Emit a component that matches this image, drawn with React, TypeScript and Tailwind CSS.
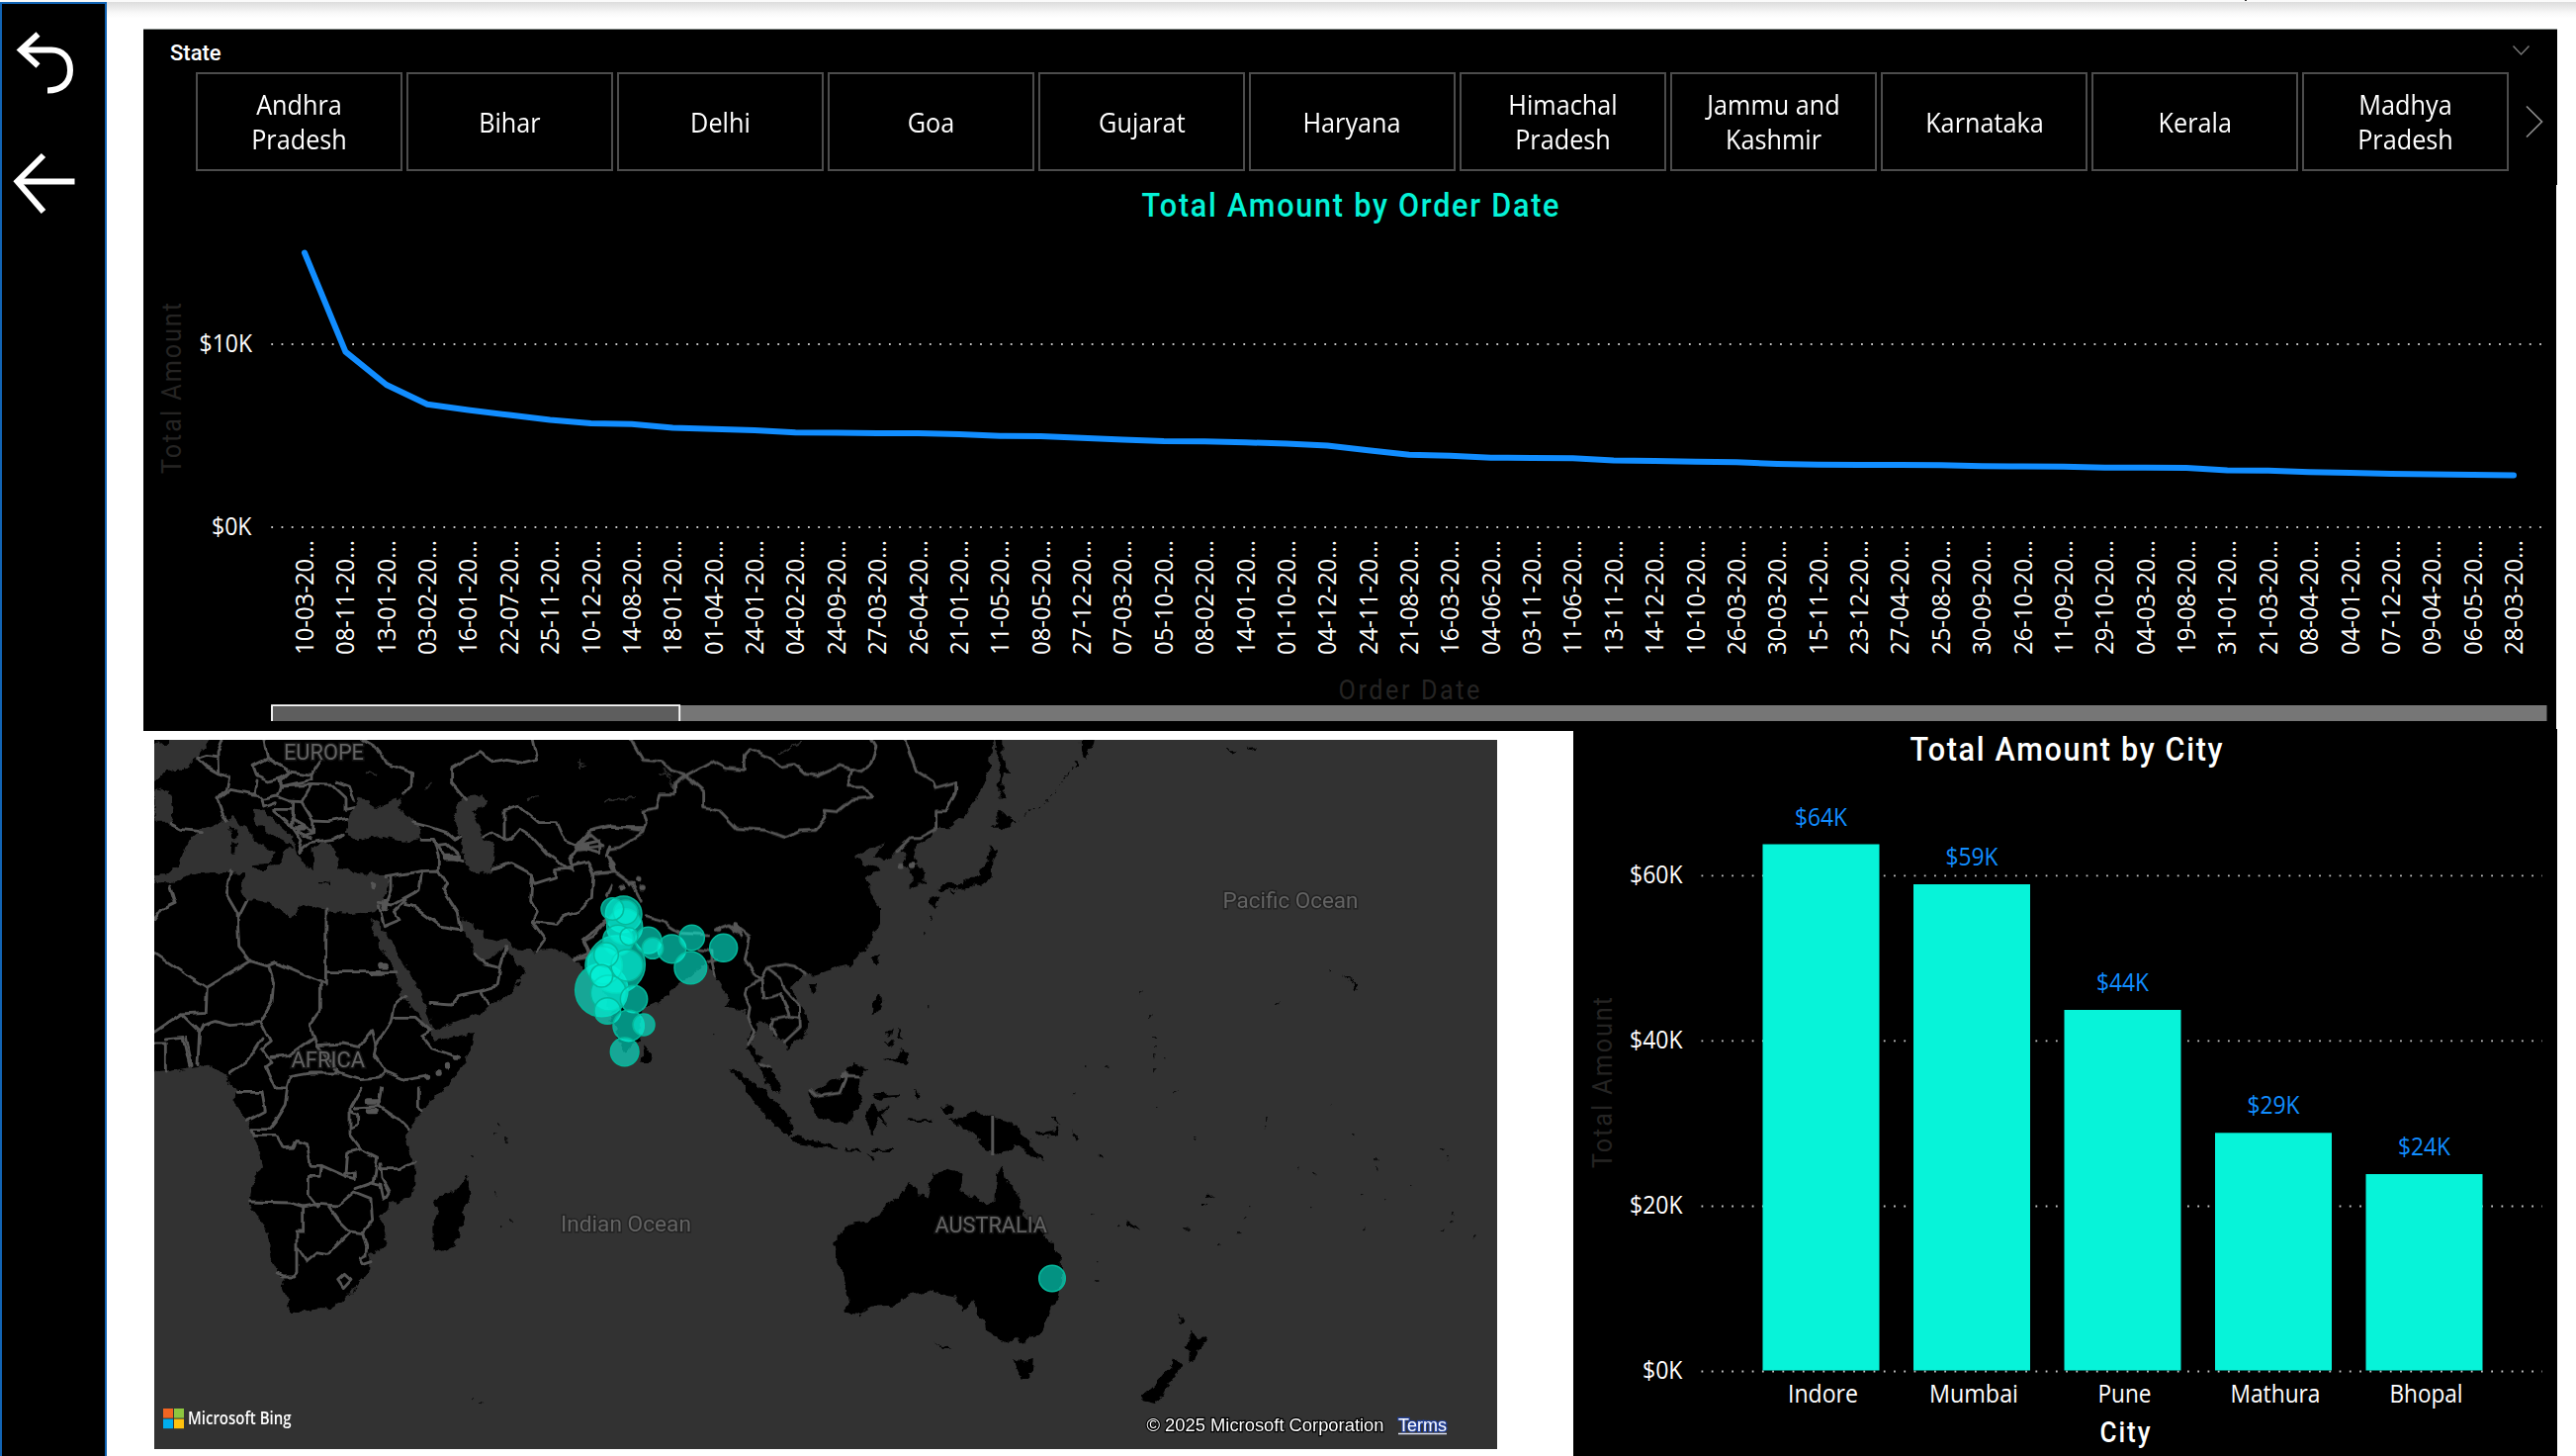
import React from "react";

const STATES = [
  "Andhra Pradesh", "Bihar", "Delhi", "Goa", "Gujarat", "Haryana",
  "Himachal Pradesh", "Jammu and Kashmir", "Karnataka", "Kerala", "Madhya Pradesh",
];

const DATES = (
  "10-03 08-11 13-01 03-02 16-01 22-07 25-11 10-12 14-08 18-01 01-04 24-01 04-02 24-09 27-03 26-04 21-01 11-05 " +
  "08-05 27-12 07-03 05-10 08-02 14-01 01-10 04-12 24-11 21-08 16-03 04-06 03-11 11-06 13-11 14-12 10-10 26-03 " +
  "30-03 15-11 23-12 27-04 25-08 30-09 26-10 11-09 29-10 04-03 19-08 31-01 21-03 08-04 04-01 07-12 09-04 06-05 28-03"
).split(" ");

const LINE_Y = [
  255.5, 355.7, 389, 408.7, 414.5, 419.5, 424.6, 428, 428.7, 432.5, 433.7, 435, 437.3, 437.5, 438, 438, 439, 440.7,
  441, 442.7, 444.5, 446, 446.3, 447.3, 448.5, 450.5, 455.3, 459.8, 460.8, 462.7, 463, 463.3, 465.4, 466, 466.8,
  467.3, 469, 469.8, 470, 470.1, 470.3, 471.3, 471.5, 471.7, 472.7, 472.8, 473, 475.5, 475.8, 477.3, 478, 479, 479.5,
  480, 480.5,
];

const X0 = 308;
const STEP = 41.37;

const CITIES = [
  { name: "Indore", w: 70, value: "$64K", top: 853.5, base: 835 },
  { name: "Mumbai", w: 89, value: "$59K", top: 894, base: 875 },
  { name: "Pune", w: 53, value: "$44K", top: 1021, base: 1002 },
  { name: "Mathura", w: 90, value: "$29K", top: 1145.3, base: 1126 },
  { name: "Bhopal", w: 73, value: "$24K", top: 1187, base: 1168 },
];

const SEGOE = "'Open Sans', 'Noto Sans', sans-serif";
const DIN = "Roboto, 'Open Sans', sans-serif";

type LabelProps = {
  x: number;
  y: number;
  w: number;
  size: number;
  fill?: string;
  anchor?: "start" | "middle" | "end";
  weight?: number;
  rotate?: boolean;
  children: string;
};

function Label({ x, y, w, size, fill = "#fff", anchor = "start", weight = 400, rotate, children }: LabelProps) {
  return (
    <text
      x={x}
      y={y}
      fontSize={size}
      fill={fill}
      textAnchor={anchor}
      fontFamily={SEGOE}
      fontWeight={weight}
      textLength={w}
      lengthAdjust="spacingAndGlyphs"
      transform={rotate ? `rotate(-90 ${x} ${y})` : undefined}
    >
      {children}
    </text>
  );
}

// Narrow, widely tracked heading text.
const NARROW = 0.9;

function Heading({ x, y, w, size, fill = "#fff", weight = 500, rotate, children }: LabelProps) {
  return (
    <text
      fontSize={size}
      fill={fill}
      fontFamily={DIN}
      fontWeight={weight}
      textLength={w / NARROW}
      lengthAdjust="spacing"
      transform={`translate(${x} ${y}) ${rotate ? "rotate(-90)" : ""} scale(${NARROW} 1)`}
    >
      {children}
    </text>
  );
}

function Grid({ x1, x2, y }: { x1: number; x2: number; y: number }) {
  return <line x1={x1} x2={x2} y1={y} y2={y} stroke="#c4c4c4" strokeWidth={1.8} strokeDasharray="1.8 8.44" />;
}

function Sidebar() {
  return (
    <nav className="h-[1470px] w-[108px] shrink-0 border-x-2 border-t-2 border-[#1264b4] bg-black">
      <svg width="104" height="230" viewBox="2 4 104 230" fill="none" stroke="#fff" strokeWidth="6">
        <path d="M38.5 34.5 L21 50.5 L38.5 66.5" />
        <path d="M21 50.5 H52 C64 50.5 71 59 71 71 C71 84 62 91.5 48 91.5" />
        <path d="M44 157 L17.5 183.5 L44 214" />
        <path d="M18 183.5 H75.5" />
      </svg>
    </nav>
  );
}

function Slicer() {
  return (
    <section className="flex h-[158px] w-[2441px] flex-col border-t border-[#8a8f8c] bg-black">
      <header className="flex h-[43px] items-start justify-between pl-[27px] pr-[27px]">
        <span className="mt-[9px] font-[Roboto] text-[22px] leading-[30px] font-medium text-white">State</span>
        <svg className="mt-[15px]" width="19" height="12" fill="none" stroke="#767676" strokeWidth="1.5">
          <path d="M1.5 1.5 L9.5 10 L17.5 1.5" />
        </svg>
      </header>
      <div className="flex items-center pl-[53px]">
        <div className="flex gap-[4px]">
          {STATES.map((s) => (
            <button
              key={s}
              className="flex h-[100px] w-[209px] items-center justify-center border-2 border-[#4c4c4c] px-[22px] text-center font-['Open_Sans'] text-[27px] leading-[35px] text-white"
            >
              <span className="max-w-[165px] scale-x-[0.935]">{s}</span>
            </button>
          ))}
        </div>
        <svg className="ml-[16px]" width="20" height="34" fill="none" stroke="#8c8c8c" strokeWidth="1.7">
          <path d="M2 1.5 L17.5 17 L2 32.5" />
        </svg>
      </div>
    </section>
  );
}

function LineChart() {
  const points = LINE_Y.map((y, i) => `${(X0 + i * STEP).toFixed(1)},${y}`).join(" ");
  return (
    <svg className="block bg-black" width="2440" height="550" viewBox="145 187 2440 550">
      <Heading x={1154.5} y={219} w={422} size={34} fill="#05f2d7">Total Amount by Order Date</Heading>
      <Heading x={182.5} y={479} w={173} size={28} fill="#252423" weight={400} rotate>Total Amount</Heading>
      <Heading x={1353.5} y={707} w={143} size={28} fill="#252423" weight={400}>Order Date</Heading>
      <Label x={201.5} y={356} w={53.5} size={25}>$10K</Label>
      <Label x={214} y={541} w={40.5} size={25}>$0K</Label>
      <Grid x1={274.3} x2={2577} y={348} />
      <Grid x1={274.3} x2={2577} y={533} />
      <polyline points={points} fill="none" stroke="#118dff" strokeWidth={6} strokeLinejoin="round" strokeLinecap="round" />
      {DATES.map((d, i) => (
        <Label key={d + i} x={X0 + i * STEP + 9} y={662} w={116} size={25} rotate>
          {d + "-20..."}
        </Label>
      ))}
      <rect x={274} y={713} width={2301.5} height={16} fill="#767676" />
      <rect x={274} y={713} width={414} height={16} fill="#5e5e5e" />
      <path d="M275 729 V713.2 H687.2 V729" fill="none" stroke="#fff" strokeWidth={1.8} />
    </svg>
  );
}

function BarChart() {
  return (
    <svg className="block shrink-0 bg-black" width="995" height="735" viewBox="1591 737 995 735">
      <Heading x={1931.5} y={769} w={316} size={34}>Total Amount by City</Heading>
      <Heading x={1629.5} y={1181} w={173} size={28} fill="#252423" weight={400} rotate>Total Amount</Heading>
      <Heading x={2123.5} y={1458} w={51} size={29}>City</Heading>
      {[
        ["$60K", 885.4], ["$40K", 1052.4], ["$20K", 1219.5], ["$0K", 1386.5],
      ].map(([t, y]) => (
        <g key={t}>
          <Label x={1701.5} y={(y as number) + 7.6} w={t === "$0K" ? 40.5 : 53.5} size={25} anchor="end">{t as string}</Label>
          <Grid x1={1720.5} x2={2571} y={y as number} />
        </g>
      ))}
      {CITIES.map((c, i) => {
        const x = 1782.5 + i * 152.5;
        return (
          <g key={c.name}>
            <rect x={x} y={c.top} width={118} height={1385.5 - c.top} fill="#07f3d9" />
            <Label x={x + 59} y={c.base} w={53} size={25} fill="#118dff" anchor="middle">{c.value}</Label>
            <Label x={x + 61} y={1418} w={c.w + 1} size={25} anchor="middle">{c.name}</Label>
          </g>
        );
      })}
    </svg>
  );
}

const BUBBLES = [
  [145, 783, 80], [190, 705, 87], [212, 553, 55], [215, 590, 54], [195, 632, 46], [287, 632, 40], [358, 658, 43],
  [419, 624, 38], [415, 715, 49], [515, 655, 42], [218, 547, 37], [178, 537, 34], [228, 620, 27], [300, 656, 32],
  [152, 708, 56], [222, 708, 48], [166, 792, 54], [159, 676, 37], [145, 740, 34], [243, 810, 41], [163, 846, 40],
  [227, 891, 47], [273, 888, 33], [215, 970, 43],
];

const WEST_BORDERS = [
  "225,24 210,60 212,125 245,138 238,175 210,205 222,240 235,268", "150,80 180,70 210,75", "150,80 175,105 212,125",
  "350,24 362,80 318,103 330,135 365,150 400,140 430,120 362,80", "365,80 430,120 495,130 525,85",
  "430,120 400,150 405,165 495,145 495,130", "330,150 325,185 345,205 390,195 400,165 395,145",
  "390,195 430,210 465,212 495,160 400,165", "495,160 560,162 600,200 600,235 625,230", "570,150 610,165 625,205",
  "500,270 545,272 600,262", "465,212 500,270 500,305 470,315", "380,235 435,235 435,290 380,240", "345,205 350,228 385,215",
  "440,215 438,290 465,330 455,365 490,335 560,325 595,310", "435,290 480,290 500,305", "210,205 250,175 325,190",
  "70,280 100,295 160,302", "440,265 475,285 450,300 490,320",
  "650,24 695,50 720,95 800,122 798,160 770,190", "1165,24 1178,85 1140,95 1090,85 1050,92 1010,62 960,85 920,110 920,155 965,208",
  "800,275 860,290 905,305 930,328 950,318", "828,325 865,325 900,375 955,392", "865,325 880,375 880,420", "870,345 905,340 940,370",
  "720,440 830,422 880,420 905,460 895,480 940,550 948,600", "830,422 822,480 740,525 700,520",
  "780,520 800,525 885,588 948,600", "780,510 745,545 762,570 715,590 700,530", "735,440 735,480 712,540",
  "1018,318 1045,303 1080,328 1080,240 1125,225 1185,275 1240,275 1265,330 1300,345 1340,300 1400,290 1500,290",
  "1080,328 1100,325 1125,295 1165,320 1210,370 1268,412 1285,415 1285,375 1300,345",
  "1045,415 1100,398 1165,432 1172,460 1235,440 1235,415 1268,412 1335,395 1350,430 1345,500 1305,545 1260,560 1240,583 1165,575",
  "1165,432 1160,510 1180,545 1165,575 1205,630 1180,665", "1350,430 1415,425 1390,375 1400,345",
  "1390,575 1320,630 1340,670 1290,690", "1300,345 1370,330 1370,365 1310,350",
  "250,420 235,490 270,550 275,650 310,695 178,775 85,715 18,670", "300,510 272,565",
  "65,465 82,520 40,540 18,572", "540,540 538,765 385,700 360,710 310,695", "540,728 750,728", "520,765 520,845 490,890 510,950 590,945 640,955 680,905 690,950",
  "178,775 175,850 100,855 18,910", "365,710 380,760 375,820 340,880 370,940 345,960 375,1000 355,1015 385,1080",
  "165,890 205,878 250,890 340,880", "100,855 155,910 150,1010", "165,890 155,910", "18,945 52,945 52,1032", "52,930 105,925 125,1010", "115,925 132,1010",
  "250,1035 300,1000 345,930", "375,985 430,980 500,930", "690,950 735,880 745,830 780,800", "745,865 810,865 855,905 830,920 860,960 940,985",
  "690,950 685,980 720,1030 780,1055 840,1045", "510,950 580,1035 490,1035 430,1045 420,1080 385,1080", "580,1035 640,1055 700,1050 720,1030",
  "990,670 1020,705 1068,715 1085,650", "1068,715 1060,770 1010,785 940,800 920,825 855,820", "1010,785 1030,828",
  "422,1080 415,1130 385,1180 365,1205 312,1205 318,1225 390,1225 410,1262 440,1260 450,1240 482,1250 492,1315 525,1315 530,1320",
  "270,1090 345,1090 355,1150 300,1180", "820,1080 820,1140 828,1150", "700,1135 760,1175 790,1205", "710,1080 700,1135 625,1140",
  "645,1080 612,1140 612,1220 645,1265 695,1290 685,1365 630,1385", "612,1150 635,1160 635,1190 615,1200",
  "645,1265 605,1275 600,1340 625,1335 625,1355 605,1350 525,1315 522,1348 487,1348 487,1405 515,1440",
  "305,1425 430,1428 470,1440 515,1432 575,1437 625,1395 675,1415 680,1480 650,1520 610,1515 580,1485 545,1435",
  "705,1310 708,1355 730,1395 715,1420 705,1375 680,1370", "700,1325 760,1325 808,1305",
  "470,1440 470,1515 450,1515 450,1640 440,1650 410,1650 390,1640", "455,1565 480,1605 510,1580 545,1585 610,1518",
  "650,1520 662,1560 660,1590 640,1600 650,1615 675,1607", "575,1660 595,1642 615,1660 592,1685 575,1660",
];

const EAST_BORDERS = [
  "235,24 270,85 330,90 360,120 400,132 480,88 520,110 580,115 580,70 598,50 650,75 690,105 730,98 765,128 800,132 870,102 930,122 960,100 978,45 965,24",
  "400,132 455,180 455,230 505,240 555,292 640,298 705,320 750,300 795,298 825,262 820,238 860,242 905,205 965,198 940,165 890,165 905,115",
  "400,132 368,155 368,188 320,188 310,230 270,240 280,275 270,305 200,350 165,355 160,375 180,400 185,425 130,430",
  "1065,24 1100,118 1150,150 1158,172 1220,155 1220,180 1190,240 1160,240 1160,295 1115,320 1085,320 1040,362",
  "110,300 165,285 270,298", "60,420 50,375 110,310 150,345 75,355", "185,425 240,465 265,510", "160,495 175,465",
  "280,560 330,575 385,610 470,615", "440,660 480,665 480,700 490,740", "470,700 500,690", "570,620 555,590 595,620 590,650 580,690 605,730 630,750",
  "490,600 530,585 560,610", "630,750 650,715 700,705 730,710 760,735", "630,750 585,775 580,800 595,830 590,865 608,910 590,948",
  "650,720 690,750 700,780 745,830 748,895 700,940", "630,750 635,810 690,795 715,860 665,870 660,895 675,920", "715,865 748,868",
  "780,1085 800,1105 870,1095 890,1045 925,1047", "165,560 120,620 90,635 110,680 60,688", "620,1005 655,1015",
];

const EURASIA_AFRICA =
  "18,24 2565,24 2550,110 2520,190 2470,260 2430,292 2390,290 2370,320 2320,350 2330,400 2358,430 2355,460 2315,472 2315,430 2290,400 2300,370 2270,360 2235,388 2205,375 2232,340 2180,360 2145,380 2170,400 2225,415 2180,440 2190,480 2220,530 2220,580 2180,650 2130,705 2030,733 1990,735 1965,760 1945,775 1980,830 2002,870 2000,910 1965,940 1935,965 1930,935 1900,925 1885,885 1850,880 1835,930 1830,950 1870,1010 1905,1040 1922,1097 1890,1085 1855,1020 1815,965 1830,900 1810,840 1750,835 1765,810 1720,740 1695,705 1670,720 1615,760 1540,825 1495,840 1492,930 1445,975 1410,880 1380,780 1360,720 1320,725 1290,690 1250,660 1180,665 1110,655 1085,628 1060,632 1020,620 970,570 950,565 950,600 985,655 1000,690 1040,685 1080,650 1095,672 1140,715 1130,750 1090,800 1030,830 1010,850 880,900 860,890 850,850 800,740 760,680 720,610 705,605 700,580 668,560 690,620 740,710 770,800 830,870 870,935 990,912 985,950 950,1020 900,1080 830,1150 795,1200 780,1230 790,1290 808,1310 808,1380 790,1415 740,1430 705,1470 722,1530 715,1560 670,1585 670,1630 600,1720 560,1745 500,1748 440,1765 425,1740 400,1650 375,1600 360,1510 305,1430 320,1360 345,1320 330,1240 310,1190 262,1130 265,1085 240,1050 190,1010 140,1015 60,1030 18,1032";

const INNER_SEAS = [
  "18,24 190,24 150,80 100,115 50,120 18,150",
  "18,170 70,185 80,240 65,275 18,275",
  "18,430 60,430 95,400 110,345 165,295 230,270 260,255 290,290 340,340 380,370 370,395 325,410 400,405 412,360 440,345 370,310 320,265 320,235 350,240 395,280 440,320 450,370 470,400 500,425 500,350 540,330 575,370 580,410 640,430 720,432 735,455 710,520 690,540 610,550 540,540 455,520 450,555 430,560 370,520 300,510 280,480 290,430 240,425 130,435 60,460 18,460",
  "600,310 605,265 635,200 665,205 690,235 740,205 770,195 760,230 820,280 825,325 770,332 700,315 640,330",
  "920,245 960,200 1020,192 1025,225 985,240 1010,300 1015,325 1050,340 1045,420 1000,435 960,400 950,320 930,270",
];

const DOTS = [
  [1152, 1003], [1162, 1026], [1166, 1047], [1166, 1057], [1166, 1067], [1176, 1068], [1167, 1080], [1187, 1102], [1083, 1106],
  [1117, 1076], [1097, 1077], [1345, 1115], [1168, 1118], [1278, 1130], [1278, 1138], [1207, 1146], [1207, 1150], [1368, 1145],
  [1312, 1179], [1327, 1186], [1326, 1219], [1390, 1171], [1392, 1180], [1425, 1196], [1376, 1206], [1376, 1241], [1398, 1211],
  [1262, 1219], [1258, 1229], [1199, 1242], [1252, 1245], [1233, 1255], [1108, 1275], [1107, 1292], [1466, 1225], [1466, 1235],
  [1490, 1249], [1457, 1241], [1291, 1014], [1458, 1160], [1464, 1170], [1104, 1225], [500, 1145], [510, 1152], [477, 1167], [504, 1136],
  [500, 1206], [516, 1233], [506, 1239], [475, 1412], [487, 1416], [939, 1016], [721, 1043], [1130, 1239], [940, 926], [934, 942],
];

function lines(list: string[]) {
  return list.map((p) => <polyline key={p} points={p} />);
}

function shapes(list: string[]) {
  return list.map((p) => <polygon key={p} points={p} />);
}

function WorldMap() {
  return (
    <svg className="block" width="1358" height="717" viewBox="156 748 1358 717">
      <defs>
        <filter id="coast" x="0" y="0" width="100%" height="100%" colorInterpolationFilters="sRGB">
          <feTurbulence type="fractalNoise" baseFrequency="0.11" numOctaves="3" seed="4" />
          <feDisplacementMap in="SourceGraphic" scale="9" xChannelSelector="R" yChannelSelector="G" />
        </filter>
        <filter id="border" filterUnits="userSpaceOnUse" x="156" y="748" width="1358" height="717" colorInterpolationFilters="sRGB">
          <feTurbulence type="fractalNoise" baseFrequency="0.09" numOctaves="1" seed="7" />
          <feDisplacementMap in="SourceGraphic" scale="6" xChannelSelector="R" yChannelSelector="G" />
        </filter>
      </defs>
      <rect x="156" y="748" width="1358" height="717" fill="#323232" />
      <g filter="url(#coast)">
        <rect x="100" y="700" width="1480" height="830" fill="#323232" />
        <g transform="translate(150 740) scale(0.33333)">
          <polygon points={EURASIA_AFRICA} />
          <rect x="-40" y="-20" width="2605" height="50" />
          <g fill="#323232">{shapes(INNER_SEAS)}</g>
          <rect x="-60" y="-30" width="80" height="1060" />
          <path d="M-60 -30 H190 L150 80 L100 115 L50 120 L18 150 L-60 150Z M-60 170 H18 V275 H-60Z M-60 430 H18 V460 H-60Z" fill="#323232" />
          {shapes([
            "250,290 268,292 264,325 252,325", "250,335 270,335 268,370 248,372", "320,403 370,398 368,420 340,420", "510,456 555,458 555,464 510,463",
            "965,1342 980,1400 962,1440 930,1560 895,1578 865,1565 862,1510 882,1460 868,1420 900,1400 935,1395",
            "-60,-30 60,-30 60,35 -60,45",
          ])}
        </g>
        <g transform="translate(560 740) scale(0.33333)">
          {shapes([
            "1335,0 1362,0 1364,80 1382,125 1365,125 1358,180 1348,180 1354,100", "1350,170 1372,200 1352,208",
            "1345,235 1365,250 1400,272 1360,305 1350,290 1325,290 1345,275", "1322,340 1345,360 1330,400 1328,440 1290,468 1265,465 1240,480 1225,470 1175,485 1160,475 1200,458 1235,460 1255,440 1280,440 1305,405 1322,390 1318,355",
            "1200,485 1225,480 1215,495", "1145,495 1168,505 1158,538 1142,520", "990,668 988,700 975,715 968,690", "775,765 798,765 795,785 780,795",
            "980,795 1003,815 985,850 968,855 972,815", "1010,905 1025,905 1020,925", "1045,900 1060,930 1045,925", "1010,940 1030,940 1020,955",
            "1060,958 1078,985 1060,1015 1035,1000 1005,990 1040,985", "275,945 295,985 290,1008 262,1008 268,975",
            "530,1018 560,1030 610,1070 650,1110 700,1150 730,1215 695,1215 620,1140 575,1070",
            "775,1095 800,1108 870,1098 890,1070 900,1040 885,1025 910,1005 950,1025 925,1045 925,1080 935,1110 915,1150 890,1190 850,1180 800,1170 780,1130",
            "790,1090 830,1065 870,1045 895,1050 880,1095 820,1105", "1100,1085 1115,1105 1100,1118 1095,1100",
            "970,1102 1050,1098 1045,1108 975,1110",
          ])}
        </g>
        <g transform="translate(760 1080) scale(0.35714 0.33333)">
          {shapes([
            "20,0 55,0 78,75 50,60", "0,38 30,60 80,125 110,155 112,198 75,180 30,130 0,75",
            "160,70 190,90 240,80 275,25 300,40 305,75 290,110 270,165 235,150 185,150 175,115",
            "115,205 165,215 220,230 250,240 245,246 180,238 120,230", "265,243 310,246 310,252 265,250", "325,262 352,270 345,278", "340,245 400,244 400,252 340,252",
            "345,85 410,80 415,88 360,95", "340,105 360,130 390,112 368,140 385,175 355,150 345,198 335,195 330,140", "465,68 480,78 468,98",
            "440,153 470,156 510,152 515,162 445,162", "528,118 565,112 568,135 545,135", "555,150 590,160 585,172",
            "580,165 605,140 640,132 685,150 720,158 755,180 760,205 790,215 785,230 830,278 795,272 755,230 740,225 735,245 700,260 665,250 645,225 640,205 610,185",
            "805,198 850,190 868,178 860,200 810,206", "840,148 860,150 875,175", "905,190 925,215 915,215", "985,262 1000,268 985,272",
            "555,308 598,320 592,372 668,415 690,400 695,320 708,290 722,350 750,370 770,440 825,500 850,530 878,575 880,640 870,690 845,730 830,795 765,835 745,812 725,832 665,800 660,765 635,745 625,700 600,742 575,695 530,682 500,676 435,690 405,722 335,725 305,748 262,740 275,710 262,630 238,570 240,510 285,470 355,458 380,415 420,388 445,348 470,365 470,385 495,388 510,325",
            "742,880 770,890 800,882 798,920 775,945 755,920", "1058,460 1085,480 1100,495 1070,478",
            "1240,800 1270,820 1290,812 1285,835 1265,850 1255,885 1238,890 1240,860 1222,845 1242,830", "1195,880 1218,905 1190,945 1160,990 1145,1018 1108,1008 1102,998 1150,950 1175,920 1190,905",
            "1205,745 1225,765 1218,772", "1272,408 1292,412 1275,418", "1285,390 1318,388 1290,396", "515,835 570,855 550,855",
          ])}
        </g>
        <g transform="translate(1000 740) scale(0.33806 0.33333)">
          {shapes(["275,0 320,0 312,45 285,80 275,60", "262,88 270,100 255,108", "225,125 240,130 228,132", "1018,720 1030,728 1022,730", "1050,735 1085,748 1105,768 1095,785 1090,755", "712,55 745,55 730,62", "770,48 800,46 785,54"])}
          <path d="M80 275 L120 240 L170 212 L200 180 L250 105" fill="none" stroke="#000" strokeWidth="4" strokeDasharray="5 12" />
        </g>
        <g fill="none" stroke="#2b2b2b" strokeWidth="2">
          <path d="M668 782 l8 2 M672 776 l6 8 M612 812 L620 808 L642 806 M672 780 L680 795 M788 762 L800 755 L812 749 M430 798 L438 790 M534 808 L544 806 M370 780 L380 784 M583 772 L592 774 M586 768 V778" />
        </g>
        {DOTS.map(([x, y], i) => (
          <rect key={i} x={x} y={y} width="2.4" height="2.2" fill="#101010" />
        ))}
      </g>
      <g filter="url(#border)" fill="none" stroke="#565656" strokeWidth="8.5" strokeLinejoin="round" strokeLinecap="round">
        <g transform="translate(150 740) scale(0.33333)">
          {lines(WEST_BORDERS)}
          <path d="M935 987h2M905 1013h2M880 1035h2M845 1047h2M665 1122h35M665 1150h25M705 710h15M680 732h25M905 380h35M460 290h10M720 515v20M685 465v4" strokeWidth="17" />
        </g>
        <g transform="translate(560 740) scale(0.33333)">
          {lines(EAST_BORDERS)}
          <path d="M1052 407h2M1085 405h2M258 446h2M268 472h2M208 470h2M498 600h2M878 1040h4M550 595h3M235 460h2M550 585v15M90 345h10" strokeWidth="17" />
        </g>
      </g>
      <path d="M1003.8 1128 V1168" stroke="#565656" strokeWidth="3" />
      <g fill="#05f3d8" fillOpacity="0.6" stroke="#05b89b" strokeWidth="1.5">
        {BUBBLES.map(([x, y, r], i) => (
          <circle key={i} cx={560 + x / 3} cy={740 + y / 3} r={r / 3} />
        ))}
        <circle cx="1064" cy="1292.5" r="13.3" />
      </g>
      <g fontFamily="Roboto, sans-serif" fill="#636363" stroke="#1c1c1c" strokeWidth="3" strokeOpacity="0.7" paintOrder="stroke" fontSize="21.5">
        <text x="287" y="768" textLength="81" lengthAdjust="spacingAndGlyphs">EUROPE</text>
        <text x="294.5" y="1079" textLength="74.5" lengthAdjust="spacingAndGlyphs">AFRICA</text>
        <text x="945.5" y="1246" textLength="113.5" lengthAdjust="spacingAndGlyphs">AUSTRALIA</text>
        <text x="567" y="1245" fontSize="22.5" textLength="132" lengthAdjust="spacingAndGlyphs">Indian Ocean</text>
        <text x="1236.5" y="918" fontSize="22.5" textLength="137" lengthAdjust="spacingAndGlyphs">Pacific Ocean</text>
      </g>
      <rect x="165" y="1424" width="10" height="9.6" fill="#f26522" />
      <rect x="176" y="1424" width="10" height="9.6" fill="#8dc63f" />
      <rect x="165" y="1434.6" width="10" height="9.6" fill="#00aeef" />
      <rect x="176" y="1434.6" width="10" height="9.6" fill="#ffc20e" />
      <Label x={190} y={1440.3} w={104.5} size={18} weight={600}>Microsoft Bing</Label>
      <g fontFamily="'Liberation Sans', Arial, sans-serif" fontSize="17.5" fill="#fff" stroke="#000" strokeWidth="2.4" paintOrder="stroke">
        <text x="1159.5" y="1446.5" textLength="240" lengthAdjust="spacingAndGlyphs">© 2025 Microsoft Corporation</text>
        <g stroke="#22419c">
          <text x="1414" y="1446.5" textLength="49" lengthAdjust="spacingAndGlyphs">Terms</text>
        </g>
      </g>
      <path d="M1414 1449.5H1463" stroke="#dfe4f5" strokeWidth="1.6" />
    </svg>
  );
}

export default function App() {
  return (
    <div className="flex h-[1472px] w-[2605px] flex-col overflow-hidden bg-white">
      <div className="flex h-[2px] justify-end bg-[#fafafa] pr-[333px]">
        <span className="h-px w-[2px] bg-[#333]" />
      </div>
      <div className="flex">
        <Sidebar />
        <main className="flex flex-1 flex-col">
          <div className="h-[27px] bg-linear-to-b from-[#dcdcdc] via-[#f8f8f8] via-40% to-white to-60%" />
          <div className="flex flex-col pl-[37px]">
            <Slicer />
            <LineChart />
            <div className="flex">
              <div className="w-[1446px] border-t-2 border-black pt-[9px] pl-[11px]">
                <WorldMap />
              </div>
              <BarChart />
            </div>
          </div>
        </main>
      </div>
    </div>
  );
}
